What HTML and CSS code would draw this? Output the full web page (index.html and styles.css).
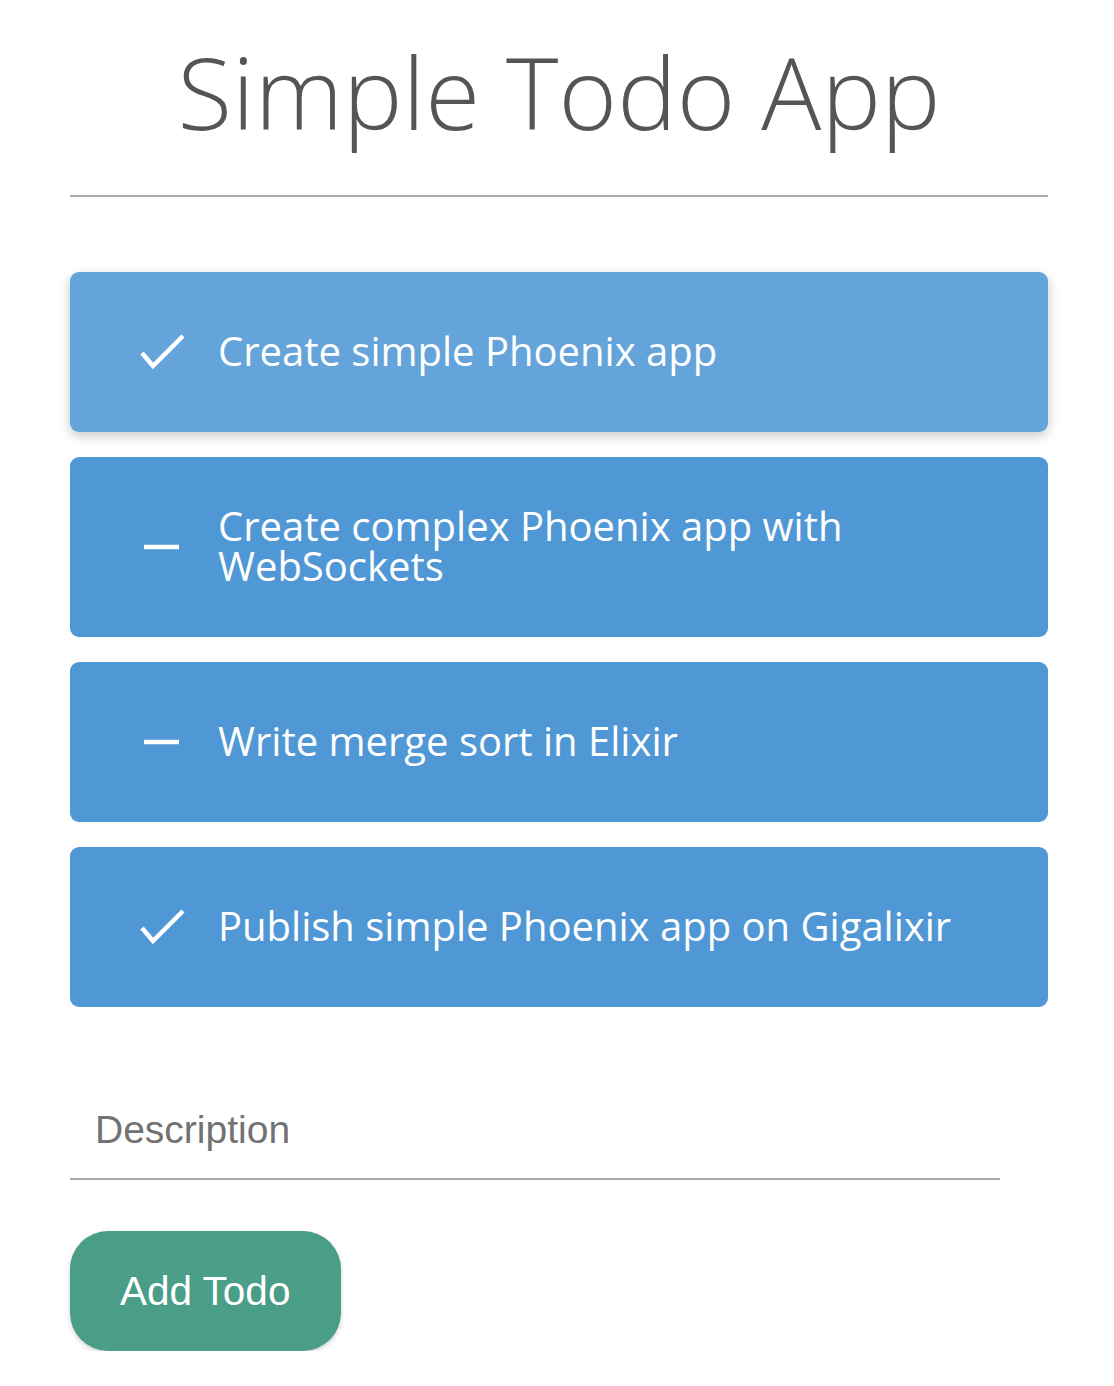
FILE: index.html
```html
<!DOCTYPE html>
<html>
<head>
<meta charset="utf-8">
<title>Simple Todo App</title>
<link rel="stylesheet" href="styles.css">
</head>
<body>
<div class="app">
  <h1 class="title">Simple Todo App</h1>
  <hr class="rule">
  <ul class="todos">
    <li class="todo todo--active">
      <span class="todo-icon"><svg width="48" height="60" viewBox="0 0 48 60"><polyline points="2,31 13,44 43,14" fill="none" stroke="#fff" stroke-width="4.5"/></svg></span>
      <span class="todo-text">Create simple Phoenix app</span>
    </li>
    <li class="todo">
      <span class="todo-icon"><svg width="48" height="60" viewBox="0 0 48 60"><line x1="4" y1="30" x2="39" y2="30" stroke="#fff" stroke-width="4.5"/></svg></span>
      <span class="todo-text">Create complex Phoenix app with WebSockets</span>
    </li>
    <li class="todo">
      <span class="todo-icon"><svg width="48" height="60" viewBox="0 0 48 60"><line x1="4" y1="30" x2="39" y2="30" stroke="#fff" stroke-width="4.5"/></svg></span>
      <span class="todo-text">Write merge sort in Elixir</span>
    </li>
    <li class="todo">
      <span class="todo-icon"><svg width="48" height="60" viewBox="0 0 48 60"><polyline points="2,31 13,44 43,14" fill="none" stroke="#fff" stroke-width="4.5"/></svg></span>
      <span class="todo-text">Publish simple Phoenix app on Gigalixir</span>
    </li>
  </ul>
  <form class="add-form">
    <input class="desc-input" type="text" placeholder="Description">
    <button class="add-btn" type="button">Add Todo</button>
  </form>
</div>
</body>
</html>
```

FILE: styles.css
```css
html, body {
  margin: 0;
  padding: 0;
  background: #fff;
}
.app {
  width: 978px;
  margin-left: 70px;
  padding-top: 20px;
}
.title {
  margin: 0;
  font-family: "Open Sans", sans-serif;
  font-weight: 300;
  font-size: 100px;
  line-height: 142px;
  color: #555;
  text-align: center;
}
.rule {
  margin: 33px 0 0 0;
  border: 0;
  height: 2px;
  background: #aaa;
}
.todos {
  list-style: none;
  margin: 75px 0 0 0;
  padding: 0;
  display: flex;
  flex-direction: column;
  gap: 25px;
}
.todo {
  display: flex;
  align-items: center;
  min-height: 60px;
  padding: 50px 70px;
  border-radius: 9px;
  background: #5097d5;
  color: #fff;
  font-family: "Open Sans", sans-serif;
  font-size: 40px;
  line-height: 40px;
}
.todo--active {
  background: #64a4da;
  box-shadow: 0 4px 12px rgba(0, 0, 0, 0.22);
}
.todo-icon {
  flex: none;
  width: 48px;
  height: 60px;
  margin-right: 30px;
  display: flex;
}
.todo-text {
  flex: 1;
  position: relative;
  top: -1px;
}
.add-form {
  display: flex;
  flex-direction: column;
  align-items: flex-start;
}
.desc-input {
  width: 930px;
  box-sizing: border-box;
  margin-top: 62px;
  padding: 38px 25px 25px 25px;
  border: 0;
  border-bottom: 2px solid #aaa;
  outline: none;
  font-family: "Liberation Sans", Arial, sans-serif;
  font-size: 39px;
  line-height: 46px;
  color: #555;
  background: transparent;
}
.desc-input::placeholder {
  color: #727272;
}
.add-btn {
  margin-top: 51px;
  padding: 40px 51px 40px 50px;
  border: 0;
  border-radius: 38px;
  background: #4a9d86;
  color: #fff;
  font-family: "Liberation Sans", Arial, sans-serif;
  font-size: 40.5px;
  line-height: 40px;
  box-shadow: 0 2px 5px rgba(0, 0, 0, 0.18);
}
```
